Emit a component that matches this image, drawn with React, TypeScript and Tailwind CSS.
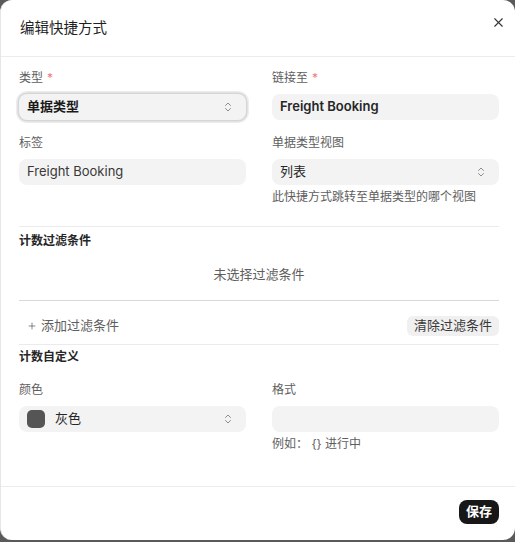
import React from 'react';
import { ChevronsUpDown, X, Plus } from 'lucide-react';

const Label: React.FC<{ text: string; required?: boolean }> = ({ text, required }) => (
  <div className="h-4 text-[12px] leading-4 text-[#5e5e5e]">
    {text}
    {required && <span className="ml-1 text-[#f07878]">*</span>}
  </div>
);

const SelectBox: React.FC<{ children: React.ReactNode; focused?: boolean }> = ({ children, focused }) => (
  <div
    className={`flex h-[26px] items-center justify-between rounded-lg bg-[#f3f3f3] pl-2 pr-3 ${
      focused ? 'ring-[1.5px] ring-[#d6d6d6] shadow-[0_0_0_3px_#ededed]' : ''
    }`}
  >
    <div className="flex items-center">{children}</div>
    <ChevronsUpDown size={12} strokeWidth={1.5} className="text-[#6b6b6b]" />
  </div>
);

export default function App() {
  return (
    <div className="h-[542px] w-[515px] bg-[#5a5a5a] font-['Inter','Noto_Sans_CJK_SC',sans-serif]">
      <div className="flex h-[540px] flex-col rounded-[12px] border-l border-[#e6e6e6] bg-white">
        {/* header */}
        <div className="flex h-[57px] shrink-0 justify-between border-b border-[#ececec] pl-[19px] pr-[9px]">
          <div className="self-center text-[14.5px] leading-5 text-[#1f1f1f]">编辑快捷方式</div>
          <button className="mt-[14px] flex h-4 w-4 items-center justify-center text-[#333]">
            <X size={15} strokeWidth={1.8} />
          </button>
        </div>

        {/* body */}
        <div className="flex flex-1 flex-col pl-[18px] pr-4 pt-[13px]">
          <div className="grid grid-cols-2 gap-x-[26px]">
            <div className="flex flex-col">
              <Label text="类型" required />
              <div className="mt-2">
                <SelectBox focused>
                  <span className="text-[13px] font-semibold text-[#1a1a1a]">单据类型</span>
                </SelectBox>
              </div>
              <div className="mt-[15px]">
                <Label text="标签" />
              </div>
              <div className="mt-2 flex h-[26px] items-center rounded-lg bg-[#f3f3f3] px-2 text-[13px] text-[#383838]">
                Freight Booking
              </div>
            </div>
            <div className="flex flex-col">
              <Label text="链接至" required />
              <div className="mt-2 flex h-[26px] items-center rounded-lg bg-[#f3f3f3] px-2 text-[13px] font-semibold text-[#262626]">
                Freight Booking
              </div>
              <div className="mt-[15px]">
                <Label text="单据类型视图" />
              </div>
              <div className="mt-2">
                <SelectBox>
                  <span className="text-[13px] text-[#262626]">列表</span>
                </SelectBox>
              </div>
              <div className="mt-1 text-[12px] leading-4 text-[#5e5e5e]">此快捷方式跳转至单据类型的哪个视图</div>
            </div>
          </div>

          {/* filters */}
          <div className="mt-[21px] border-t border-[#ebebeb] pt-[6px]">
            <div className="text-[12px] font-semibold leading-4 text-[#262626]">计数过滤条件</div>
            <div className="flex h-[51px] items-center justify-center text-[13px] text-[#5e5e5e]">未选择过滤条件</div>
          </div>
          <div className="flex items-center justify-between border-t border-[#d9d9d9] pb-[8px] pt-[15px]">
            <button className="flex items-center gap-1 pl-2 text-[13px] text-[#5e5e5e]">
              <Plus size={10} strokeWidth={1.8} />
              添加过滤条件
            </button>
            <button className="flex h-5 items-center rounded-md bg-[#f0f0f0] px-[7px] text-[13px] text-[#383838]">
              清除过滤条件
            </button>
          </div>

          {/* count customise */}
          <div className="border-t border-[#ebebeb] pt-[4px]">
            <div className="text-[12px] font-semibold leading-4 text-[#262626]">计数自定义</div>
          </div>
          <div className="mt-[17px] grid grid-cols-2 gap-x-[26px]">
            <div className="flex flex-col">
              <Label text="颜色" />
              <div className="mt-2">
                <SelectBox>
                  <span className="h-[18px] w-[18px] rounded-[5px] bg-[#555555]" />
                  <span className="ml-[10px] text-[13px] text-[#262626]">灰色</span>
                </SelectBox>
              </div>
            </div>
            <div className="flex flex-col">
              <Label text="格式" />
              <div className="mt-2 h-[26px] rounded-lg bg-[#f3f3f3]" />
              <div className="mt-1 text-[12px] leading-4 text-[#5e5e5e]">例如： {'{}'} 进行中</div>
            </div>
          </div>
        </div>

        {/* footer */}
        <div className="flex shrink-0 justify-end border-t border-[#ececec] pb-[16px] pr-4 pt-[13px]">
          <button className="flex h-6 items-center rounded-lg bg-[#171717] px-[7px] text-[13px] font-semibold text-white">
            保存
          </button>
        </div>
      </div>
    </div>
  );
}
